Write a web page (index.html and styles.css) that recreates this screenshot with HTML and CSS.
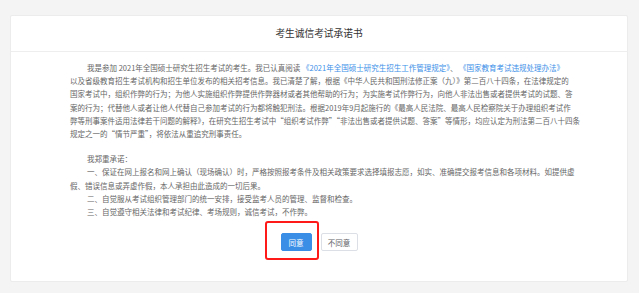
FILE: index.html
```html
<!DOCTYPE html>
<html lang="zh-CN">
<head>
<meta charset="utf-8">
<title>考生诚信考试承诺书</title>
<link rel="stylesheet" href="styles.css">
</head>
<body>
<div class="card">
  <div class="card-header">考生诚信考试承诺书</div>
  <div class="card-body">
    <p class="para indent">我是参加 2021年全国硕士研究生招生考试的考生。我已认真阅读 <a class="link">《2021年全国硕士研究生招生工作管理规定》</a>、 <a class="link">《国家教育考试违规处理办法》</a><br>以及省级教育招生考试机构和招生单位发布的相关招考信息。我已清楚了解，根据《中华人民共和国刑法修正案（九）》第二百八十四条，在法律规定的<br>国家考试中，组织作弊的行为；为他人实施组织作弊提供作弊器材或者其他帮助的行为；为实施考试作弊行为，向他人非法出售或者提供考试的试题、答<br>案的行为；代替他人或者让他人代替自己参加考试的行为都将触犯刑法。根据2019年9月起施行的《最高人民法院、最高人民检察院关于办理组织考试作<br>弊等刑事案件适用法律若干问题的解释》，在研究生招生考试中“组织考试作弊”“非法出售或者提供试题、答案”等情形，均应认定为刑法第二百八十四条<br>规定之一的“情节严重”，将依法从重追究刑事责任。</p>
    <p class="line indent">我郑重承诺：</p>
    <p class="line indent">一、保证在网上报名和网上确认（现场确认）时，严格按照报考条件及相关政策要求选择填报志愿，如实、准确提交报考信息和各项材料。如提供虚<br>假、错误信息或弄虚作假，本人承担由此造成的一切后果。</p>
    <p class="line indent">二、自觉服从考试组织管理部门的统一安排，接受监考人员的管理、监督和检查。</p>
    <p class="line indent">三、自觉遵守相关法律和考试纪律、考场规则，诚信考试，不作弊。</p>
    <div class="actions">
      <button class="btn btn-primary">同意<span class="highlight"></span></button>
      <button class="btn btn-default">不同意</button>
    </div>
  </div>
</div>
</body>
</html>
```

FILE: styles.css
```css
html, body {
  margin: 0;
  padding: 0;
}
body {
  background: #f4f4f4;
  font-family: "Noto Sans CJK SC", "Noto Sans", sans-serif;
  padding: 15px 11px 11px 10px;
  height: 293px;
  box-sizing: border-box;
}
.card {
  background: #fff;
  border: 1px solid #ececec;
  border-radius: 2px;
  height: 267px;
  box-sizing: border-box;
}
.card-header {
  height: 35px;
  line-height: 34px;
  text-align: center;
  font-size: 9.7px;
  color: #333;
  border-bottom: 1px solid #eeeeee;
}
.card-body {
  padding: 9px 50px 0 59px;
  font-size: 7.5px;
  line-height: 13.2px;
  color: #666;
}
.para, .line {
  margin: 0;
  white-space: nowrap;
}
.para {
  margin-bottom: 12px;
}
.indent {
  text-indent: 17px;
}
.link {
  color: #3b8fe8;
  text-decoration: none;
}
.actions {
  display: flex;
  justify-content: center;
  gap: 9px;
  margin-top: 15px;
  padding-right: 9px;
}
.btn {
  position: relative;
  height: 18px;
  padding: 0;
  border-radius: 2px;
  font-family: "Noto Sans CJK SC", sans-serif;
  font-size: 7.5px;
  cursor: pointer;
}
.btn-primary {
  width: 31px;
  background: #3a8ee6;
  border: 1px solid #3a8ee6;
  color: #fff;
}
.btn-default {
  width: 37px;
  background: #fff;
  border: 1px solid #dcdfe6;
  color: #606266;
}
.highlight {
  position: absolute;
  left: -17px;
  top: -13px;
  width: 54px;
  height: 39px;
  box-sizing: border-box;
  border: 2px solid #ff1a1a;
  border-radius: 3px;
}
```
